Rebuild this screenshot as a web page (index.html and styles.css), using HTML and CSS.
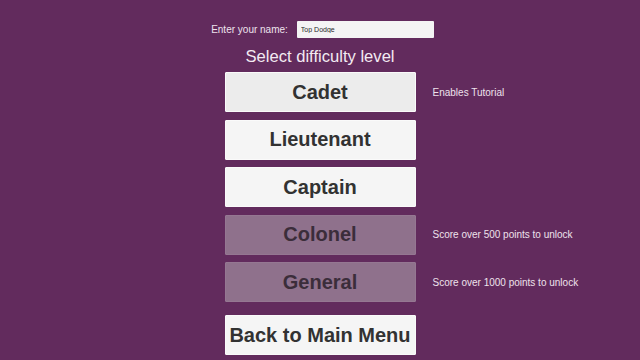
FILE: index.html
```html
<!DOCTYPE html>
<html lang="en">
<head>
  <meta charset="UTF-8">
  <title>Select difficulty</title>
  <link rel="stylesheet" href="styles.css">
</head>
<body>
  <div class="name-row">
    <label for="playerName">Enter your name:</label>
    <input type="text" id="playerName" value="Top Dodge">
  </div>

  <h2 class="title">Select difficulty level</h2>

  <div class="levels">
    <span></span>
    <button class="level level-active">Cadet</button>
    <span class="note">Enables Tutorial</span>

    <span></span>
    <button class="level">Lieutenant</button>
    <span class="note"></span>

    <span></span>
    <button class="level">Captain</button>
    <span class="note"></span>

    <span></span>
    <button class="level" disabled>Colonel</button>
    <span class="note">Score over 500 points to unlock</span>

    <span></span>
    <button class="level" disabled>General</button>
    <span class="note">Score over 1000 points to unlock</span>
  </div>

  <div class="back-row">
    <button class="level">Back to Main Menu</button>
  </div>
</body>
</html>
```

FILE: styles.css
```css
* {
  font-family: 'Liberation Sans', Arial, sans-serif;
  box-sizing: border-box;
}

body {
  margin: 0;
  width: 640px;
  height: 360px;
  overflow: hidden;
  background-color: #622b5d;
  color: #f0e6ef;
}

.name-row {
  display: flex;
  justify-content: center;
  align-items: center;
  gap: 9px;
  padding-top: 21px;
  padding-left: 5px;
  height: 38px;
}

.name-row label {
  font-size: 10px;
  color: #eee3ed;
}

.name-row input {
  width: 137px;
  height: 17px;
  padding: 0 4px;
  border: none;
  border-radius: 1px;
  background-color: #f4f4f4;
  font-size: 7px;
  color: #2a2a2a;
  outline: none;
}

.title {
  margin: 0;
  padding-top: 9px;
  height: 34px;
  text-align: center;
  font-size: 16.6px;
  font-weight: 400;
  color: #f3eaf2;
}

.levels {
  display: grid;
  grid-template-columns: 1fr 191px 1fr;
  grid-auto-rows: 40px;
  column-gap: 17px;
  row-gap: 7.5px;
}

.level {
  margin: 0;
  padding: 0;
  width: 191px;
  height: 40px;
  border: 1px solid #fafafa;
  border-radius: 1px;
  background-color: #f5f5f5;
  color: #323232;
  font-size: 20px;
  font-weight: bold;
  cursor: pointer;
}

.level-active {
  background-color: #ececec;
}

.level:disabled {
  background-color: #8f718c;
  border-color: #957792;
  color: #3b2d3a;
  cursor: default;
}

.note {
  display: flex;
  align-items: center;
  font-size: 10px;
  color: #eee2ec;
}

.back-row {
  display: flex;
  justify-content: center;
  margin-top: 13px;
}
```
